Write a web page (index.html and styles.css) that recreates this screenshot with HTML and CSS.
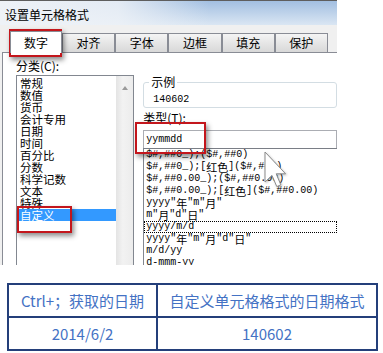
FILE: index.html
```html
<!DOCTYPE html>
<html>
<head>
  <meta charset="utf-8">
  <link rel="stylesheet" href="styles.css">
</head>
<body>
  <div class="dialog">
    <div class="titlebar">设置单元格格式</div>

    <div class="tabs">
      <div class="tab active">数字</div>
      <div class="tab">对齐</div>
      <div class="tab">字体</div>
      <div class="tab">边框</div>
      <div class="tab">填充</div>
      <div class="tab">保护</div>
    </div>

    <div class="panel">
      <div class="left-col">
        <div class="label">分类(C):</div>
        <div class="cat-box">
          <ul class="cat-list">
            <li>常规</li>
            <li>数值</li>
            <li>货币</li>
            <li>会计专用</li>
            <li>日期</li>
            <li>时间</li>
            <li>百分比</li>
            <li>分数</li>
            <li>科学记数</li>
            <li>文本</li>
            <li>特殊</li>
            <li class="selected">自定义</li>
          </ul>
          <div class="scrollbar"><span class="arrow-up"></span></div>
        </div>
      </div>

      <div class="right-col">
        <fieldset class="sample">
          <legend>示例</legend>
          <div class="sample-value">140602</div>
        </fieldset>
        <div class="label type-label">类型(T):</div>
        <div class="type-input">yymmdd</div>
        <ul class="fmt-list">
          <li>$#,##0_);($#,##0)</li>
          <li>$#,##0_);[<span class="zh">红色</span>]($#,##0)</li>
          <li>$#,##0.00_);($#,##0.00)</li>
          <li>$#,##0.00_);[<span class="zh">红色</span>]($#,##0.00)</li>
          <li>yyyy"<span class="zh">年</span>"m"<span class="zh">月</span>"</li>
          <li>m"<span class="zh">月</span>"d"<span class="zh">日</span>"</li>
          <li class="focused">yyyy/m/d</li>
          <li>yyyy"<span class="zh">年</span>"m"<span class="zh">月</span>"d"<span class="zh">日</span>"</li>
          <li>m/d/yy</li>
          <li>d-mmm-yy</li>
        </ul>
      </div>
    </div>

    <!-- red annotation frames -->
    <div class="mark mark-tab"></div>
    <div class="mark mark-cat"></div>
    <div class="mark mark-type"></div>

    <svg class="cursor" width="24" height="38" viewBox="0 0 12 19">
      <polygon points="0.5,0.5 0.5,15.5 4,12.2 6.4,17.8 8.4,16.9 6.1,11.4 10.8,11.4" fill="#fff" stroke="#8a8a8a" stroke-width="0.5" stroke-linejoin="round"/>
    </svg>
  </div>

  <table class="compare">
    <tr>
      <td class="col-a">Ctrl+；获取的日期</td>
      <td>自定义单元格格式的日期格式</td>
    </tr>
    <tr>
      <td class="col-a">2014/6/2</td>
      <td>140602</td>
    </tr>
  </table>
</body>
</html>
```

FILE: styles.css
```css
body { margin: 0; background: #fff; font-family: "Noto Sans CJK SC", sans-serif; }

.dialog {
  position: relative;
  width: 337px;
  height: 265px;
  overflow: hidden;
  background: #f0f0f0;
  font-size: 12px;
  color: #000;
}

.titlebar {
  height: 25px;
  box-sizing: border-box;
  border-top: 1px solid #5e5e5e;
  padding: 7px 0 0 5px;
  line-height: 14px;
  background:
    linear-gradient(to right, rgba(238,242,247,1) 0%, rgba(238,242,247,0.85) 35%, rgba(238,242,247,0) 62%),
    linear-gradient(to bottom, #a2bfe1, #dae6f3);
}

.tabs {
  display: flex;
  align-items: flex-end;
  height: 27px;
  padding-left: 10px;
  box-sizing: border-box;
}
.tab {
  width: 53.2px;
  height: 19px;
  box-sizing: border-box;
  border: 1px solid #898c95;
  border-bottom: none;
  background: linear-gradient(#f4f4f4, #d8d8d8);
  text-align: center;
  line-height: 18px;
}
.tab.active {
  width: 52px;
  height: 22px;
  margin-bottom: -1px;
  padding-top: 2px;
  background: #fff;
  position: relative;
  z-index: 1;
}

.panel {
  display: flex;
  margin-left: 2px;
  height: 300px;
  background: #fff;
  border: 1px solid #898c95;
  border-right: none;
}

.left-col { margin-left: 13px; width: 122px; }
.label { margin-top: 6px; line-height: 14px; }

.cat-box {
  display: flex;
  margin-top: 2px;
  height: 200px;
  border: 1px solid #828790;
}
.cat-list {
  flex: 1;
  margin: 0;
  padding: 1px 0 0;
  list-style: none;
}
.cat-list li { height: 12px; line-height: 12px; font-size: 11.5px; padding-left: 3px; white-space: nowrap; }
.cat-list li.selected { background: #3399ff; color: #fff; }

.scrollbar {
  width: 17px;
  padding-top: 10px;
  box-sizing: border-box;
  text-align: center;
  background: linear-gradient(to right, #e4e4e4, #f2f2f2 40%, #ececec);
}
.arrow-up {
  display: inline-block;
  width: 0;
  height: 0;
  border-left: 3.5px solid transparent;
  border-right: 3.5px solid transparent;
  border-bottom: 4px solid #9a9a9a;
  vertical-align: top;
}

.right-col { margin-left: 9px; width: 200px; }

.sample {
  margin: 22px 0 0;
  padding: 5px 8px 1px 9px;
  border: 1px solid #d3dde3;
  border-radius: 3px;
}
.sample legend {
  margin-left: -4px;
  padding: 0 2px;
  line-height: 14px;
}
.sample-value,
.type-input,
.fmt-list {
  font-family: "Liberation Mono", "Noto Sans CJK SC", monospace;
  font-size: 10px;
}
.sample-value { line-height: 12px; }

.type-label { margin-top: 3px; }
.type-input {
  margin-top: 5px;
  height: 18px;
  box-sizing: border-box;
  padding-left: 2px;
  line-height: 17px;
  border: 1px solid #abadb3;
  border-bottom: none;
}

.fmt-list {
  margin: 0;
  padding: 0 0 0 2px;
  list-style: none;
  border-top: 1px solid #7a7e86;
  border-left: 1px solid #828790;
}
.fmt-list li { height: 12px; line-height: 12px; white-space: nowrap; }
.fmt-list .zh {
  display: inline-block;
  height: 12px;
  vertical-align: top;
  font-family: "Noto Sans CJK SC", sans-serif;
  font-size: 11px;
  line-height: 12px;
}
.fmt-list li.focused { outline: 1px dotted #000; outline-offset: -1px; margin-left: -2px; padding-left: 2px; }

.mark {
  position: absolute;
  box-sizing: border-box;
  border: 2px solid #c3161c;
  box-shadow: 2px 3px 5px rgba(0, 0, 0, 0.45);
}
.mark-tab { left: 9px; top: 29px; width: 53px; height: 28px; }
.mark-cat { left: 17px; top: 206px; width: 55px; height: 27px; }
.mark-type { left: 135px; top: 122px; width: 71px; height: 32px; }

.cursor {
  position: absolute;
  left: 264px;
  top: 151px;
  filter: drop-shadow(1px 1px 1px rgba(0, 0, 0, 0.25));
}

.compare {
  margin: 18px 0 0 7px;
  width: 371px;
  border-collapse: collapse;
  font-size: 15px;
  color: #4472c4;
}
.compare td {
  height: 31px;
  padding: 0;
  text-align: center;
  border: 2px solid #243f7a;
  white-space: nowrap;
}
.compare .col-a { width: 147px; }
```
